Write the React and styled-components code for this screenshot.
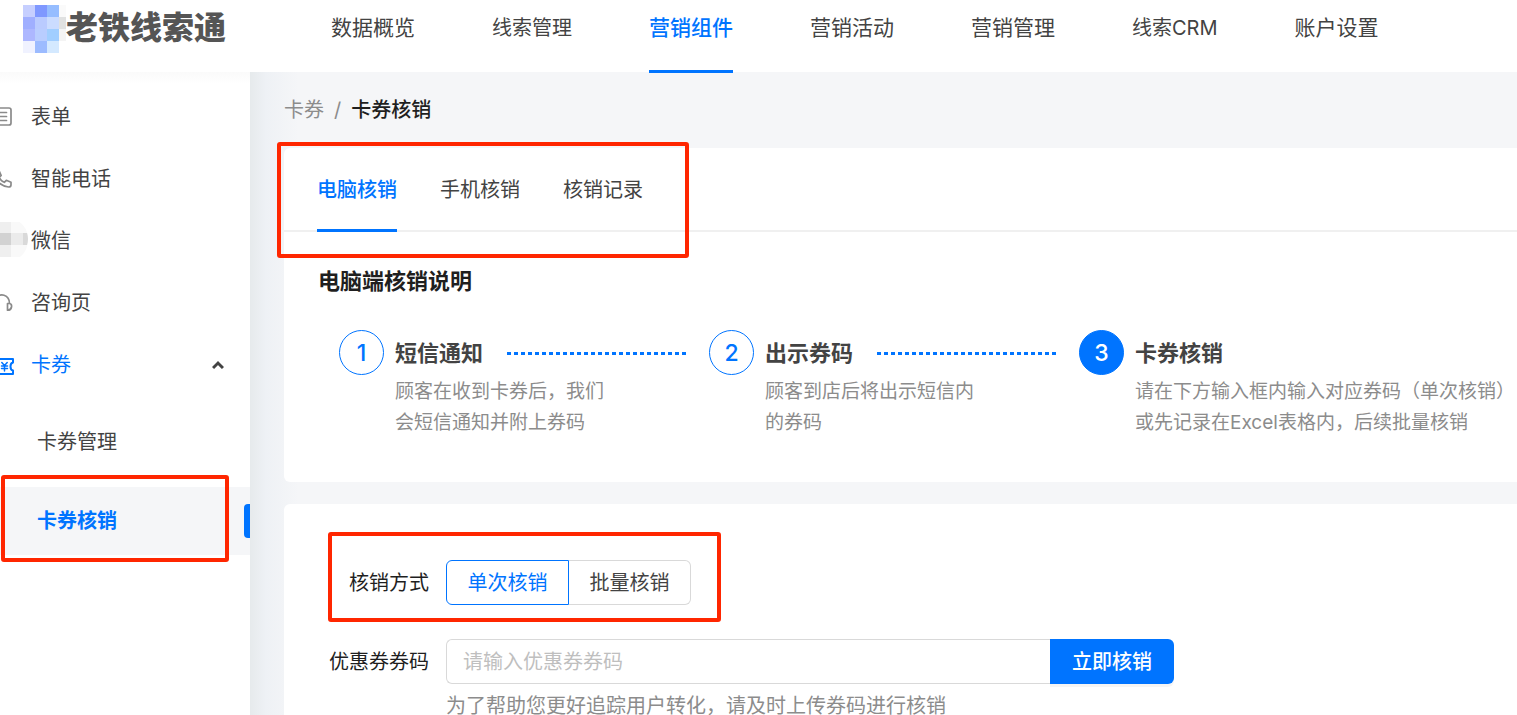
import React from 'react';
import styled, { createGlobalStyle } from 'styled-components';

const BLUE = '#0074ff';

const GlobalStyle = createGlobalStyle`
  * { box-sizing: border-box; }
  html, body, #root { min-height: 100vh; }
  body {
    margin: 0;
    background: #f5f6f8;
    color: #434343;
    font: 20px/32px Inter, "Noto Sans CJK SC", sans-serif;
    overflow: hidden;
  }
  button, input { font: inherit; color: inherit; }
  a { color: inherit; text-decoration: none; }
`;

const Page = styled.div`
  min-height: 100vh;
  display: flex;
  flex-direction: column;
`;

const Header = styled.header`
  display: flex;
  height: 72px;
  background: #fff;
  flex: none;
`;

const Brand = styled.a`
  display: flex;
  align-items: flex-start;
  width: 331px;
  flex: none;
  padding: 5px 0 0 23px;
`;

const BrandName = styled.span`
  font-size: 32px;
  line-height: 46px;
  font-weight: 900;
  color: #555;
`;

const Nav = styled.nav`
  display: flex;
  gap: 77px;
  white-space: nowrap;
`;

const NavLink = styled.a`
  font-size: ${(p) => (p.$small ? '20px' : '21px')};
  line-height: 56px;
  height: 73px;
  position: relative;
  color: ${(p) => (p.$active ? BLUE : '#434343')};
  font-weight: ${(p) => (p.$active ? 500 : 400)};
  border-bottom: 3px solid ${(p) => (p.$active ? BLUE : 'transparent')};
`;

const Body = styled.div`
  display: flex;
  flex: 1;
`;

const Sidebar = styled.aside`
  width: 250px;
  flex: none;
  padding-top: 14px;
  background: linear-gradient(#fafafa, #fff 12px);
`;

const SideLink = styled.a`
  display: flex;
  align-items: center;
  height: 62px;
  padding-right: 26px;
  color: ${(p) => (p.$active ? BLUE : '#434343')};
`;

const SideIcon = styled.span`
  display: flex;
  width: 31px;
  color: ${(p) => (p.$active ? BLUE : '#8a8a8a')};
`;

const SideText = styled.span`
  flex: 1;
`;

const CaretBox = styled.span`
  display: flex;
  color: #434343;
`;

const SubMenu = styled.div`
  padding-top: 12px;
  display: flex;
  flex-direction: column;
  gap: 11px;
`;

const SubLink = styled.a`
  display: flex;
  align-items: center;
  justify-content: space-between;
  height: 68px;
  padding-left: 37px;
  position: relative;
  color: ${(p) => (p.$active ? BLUE : '#434343')};
  font-weight: ${(p) => (p.$active ? 700 : 400)};
  background: ${(p) => (p.$active ? '#f5f6f8' : 'transparent')};
`;

const ActiveBar = styled.span`
  width: 6px;
  height: 34px;
  background: ${BLUE};
  border-radius: 4px 0 0 4px;
`;

const Main = styled.main`
  flex: 1;
  min-width: 0;
  padding-left: 34px;
  background: linear-gradient(90deg, #e6eaec, #eef1f5 16px, #f5f6f8 48px);
`;

const Breadcrumb = styled.nav`
  display: flex;
  gap: 10px;
  height: 76px;
  padding-top: 22px;
  color: #8c8c8c;
`;

const Current = styled.span`
  color: #1f1f1f;
  font-weight: 500;
`;

const Card = styled.section`
  position: relative;
  background: #fff;
  border-radius: 6px 0 0 6px;
`;

const Tabs = styled.div`
  display: flex;
  gap: 43px;
  height: 84px;
  padding: 0 33px;
  border-bottom: 2px solid #f0f0f0;
`;

const Tab = styled.button`
  border: 0;
  background: none;
  padding: 3px 0 0;
  height: 84px;
  color: ${(p) => (p.$active ? BLUE : '#434343')};
  font-weight: ${(p) => (p.$active ? 500 : 400)};
  border-bottom: 3px solid ${(p) => (p.$active ? BLUE : 'transparent')};
`;

const Guide = styled.div`
  height: 250px;
  padding: 33px 0 0 34px;
`;

const Title = styled.h2`
  margin: 0;
  font-size: 22px;
  line-height: 32px;
  font-weight: 700;
  color: #1f1f1f;
`;

const Steps = styled.ol`
  list-style: none;
  display: flex;
  margin: 0;
  padding: 33px 0 0 21px;
`;

const Step = styled.li`
  display: flex;
  gap: 11px;
  flex: ${(p) => (p.$last ? '1 0 auto' : '0 0 370px')};
`;

const StepNumber = styled.span`
  display: flex;
  align-items: center;
  justify-content: center;
  flex: none;
  width: 45px;
  height: 45px;
  border-radius: 50%;
  border: 1px solid ${BLUE};
  font-size: 23px;
  font-weight: 500;
  color: ${(p) => (p.$filled ? '#fff' : BLUE)};
  background: ${(p) => (p.$filled ? BLUE : '#fff')};
`;

const StepBody = styled.div`
  flex: 1;
`;

const StepHead = styled.div`
  display: flex;
  align-items: center;
  gap: 24px;
  height: 46px;
  padding-right: 22px;
`;

const StepName = styled.h3`
  margin: 0;
  font-size: 22px;
  font-weight: 700;
  color: #434343;
`;

const Dots = styled.span`
  flex: 1;
  height: 3px;
  background: repeating-linear-gradient(90deg, ${BLUE} 0 4px, transparent 4px 7px);
`;

const StepText = styled.p`
  margin: 0;
  font-size: 19px;
  line-height: 31px;
  color: #8c8c8c;
  white-space: pre;
`;

const FormCard = styled(Card)`
  margin-top: 22px;
  padding-top: 56px;
  min-height: 220px;
`;

const Field = styled.div`
  display: flex;
  align-items: center;
  height: 45px;
  margin-bottom: ${(p) => (p.$last ? 0 : '34px')};
`;

const FieldLabel = styled.label`
  width: 145px;
  margin-right: 17px;
  text-align: right;
  color: #1f1f1f;
`;

const Toggle = styled.button`
  width: ${(p) => (p.$active ? '123px' : '122px')};
  height: 45px;
  padding: 0;
  background: #fff;
  color: ${(p) => (p.$active ? BLUE : '#434343')};
  border: solid ${(p) => (p.$active ? BLUE : '#d9d9d9')};
  border-width: ${(p) => (p.$active ? '1px' : '1px 1px 1px 0')};
  border-radius: ${(p) => (p.$active ? '6px 0 0 6px' : '0 6px 6px 0')};
`;

const Input = styled.input`
  width: 604px;
  height: 45px;
  padding: 0 16px;
  border: 1px solid #d9d9d9;
  border-right: 0;
  border-radius: 6px 0 0 6px;
  outline: 0;
  background: #fff;
  &::placeholder { color: #bfbfbf; opacity: 1; }
`;

const Submit = styled.button`
  width: 124px;
  height: 45px;
  padding: 0;
  border: 0;
  border-radius: 0 6px 6px 0;
  color: #fff;
  font-weight: 500;
  background: ${BLUE};
  box-shadow: 0 3px 0 rgba(0, 0, 0, 0.04);
`;

const Hint = styled.p`
  margin: 0;
  padding: 6px 0 0 162px;
  color: #8c8c8c;
`;

const Highlight = styled.span`
  position: absolute;
  left: ${(p) => p.$x}px;
  top: ${(p) => p.$y}px;
  width: ${(p) => p.$w}px;
  height: ${(p) => p.$h}px;
  border: 4px solid #ff2600;
  border-radius: 3px;
  pointer-events: none;
`;

const Mosaic = () => (
  <svg width="43" height="48" viewBox="0 0 43 48" shapeRendering="crispEdges" aria-hidden="true">
    {[
      ['#c6cfff', '#7f98ff', '#96bdff'],
      ['#a0afff', '#bacbff', '#cbdcff'],
      ['#adb7ff', '#b9cdff', '#a1ceff'],
      ['#f0f2ff', '#9cbbff', '#d4e9ff'],
    ].map((row, y) =>
      row.map((fill, x) => (
        <rect key={`${x}-${y}`} x={x * 12} y={y * 12} width="12" height="12" fill={fill} />
      ))
    )}
    <rect x="36" width="7" height="12" fill="#fafafa" />
    <rect x="36" y="12" width="7" height="12" fill="#e0e1e1" />
    <rect x="36" y="24" width="7" height="12" fill="#f4f4f4" />
  </svg>
);

const iconProps = {
  fill: 'none',
  stroke: 'currentColor',
  strokeWidth: 1.7,
  strokeLinecap: 'round',
  strokeLinejoin: 'round',
  'aria-hidden': true,
};

const FormIcon = () => (
  <svg width="16" height="22" viewBox="0 0 16 22" {...iconProps}>
    <path d="M-5 2H9a2 2 0 0 1 2 2V17a2 2 0 0 1-2 2H-5M-2 6.500H6.500M-2 10.500H6.500M-2 14.500H6.500" />
  </svg>
);

const PhoneIcon = () => (
  <svg width="16" height="22" viewBox="0 0 16 22" {...iconProps}>
    <path d="M-1 2.500L1.200 7.500L-0.800 9.500Q1 13 4.300 14.300L6.300 12.300L11 14.300V17Q11 19 8.500 19Q2.500 18.500 -3 13" />
  </svg>
);

const WechatMosaic = () => (
  <svg width="28" height="38" viewBox="0 1 28 38" aria-hidden="true">
    <path d="M11 0H18Q28 6 28 18Q28 30 20 36H11Z" fill="#f9f9f9" />
    <path d="M0 0H11V36H0Z" fill="#efefef" />
    <path d="M0 12H11V24H0Z" fill="#d2d2d2" />
    <path d="M11 12H23V24H11Z" fill="#ebebeb" />
    <path d="M23 12H27Q29 18 27 24H23Z" fill="#d9d9d9" />
  </svg>
);

const HeadsetIcon = () => (
  <svg width="16" height="22" viewBox="0 0 16 22" {...iconProps}>
    <path d="M-2 4Q1 2.200 4 3.200Q9.500 5 9.500 11.500M7.500 11.500H9.500Q12 12 11.500 15Q11 18.200 7.500 18.200Z" />
  </svg>
);

const CouponIcon = () => (
  <svg width="16" height="22" viewBox="0 0 16 22" {...iconProps} strokeWidth="2">
    <path d="M-2 5H13V8.500Q10.500 9 10.500 12.500Q10.500 16 13 16.500V20H-2" />
    <path d="M1.800 8.500L4.500 11.500L7.200 8.500M4.500 11.500V17M1.500 12H7.500M1.500 14.500H7.500" strokeWidth="1.500" />
  </svg>
);

const Caret = () => (
  <svg width="12" height="10" viewBox="0 0 12 10" {...iconProps} strokeWidth="3" strokeLinecap="butt" strokeLinejoin="miter">
    <path d="M1 8L6 3L11 8" />
  </svg>
);

const NAV = ['数据概览', '线索管理', '营销组件', '营销活动', '营销管理', '线索CRM', '账户设置'];
const SIDE = [
  ['表单', FormIcon],
  ['智能电话', PhoneIcon],
  ['微信', WechatMosaic],
  ['咨询页', HeadsetIcon],
  ['卡券', CouponIcon],
];
const STEPS = [
  ['短信通知', '顾客在收到卡券后，我们\n会短信通知并附上券码'],
  ['出示券码', '顾客到店后将出示短信内\n的券码'],
  ['卡券核销', '请在下方输入框内输入对应券码（单次核销）\n或先记录在Excel表格内，后续批量核销'],
];

export default function App() {
  return (
    <Page>
      <GlobalStyle />
      <Header>
        <Brand href="#">
          <Mosaic />
          <BrandName>老铁线索通</BrandName>
        </Brand>
        <Nav>
          {NAV.map((name) => (
            <NavLink
              key={name}
              href="#"
              $active={name === '营销组件'}
              $small={name.startsWith('线索')}
            >
              {name}
            </NavLink>
          ))}
        </Nav>
      </Header>
      <Body>
        <Sidebar>
          {SIDE.map(([name, Icon]) => {
            const active = name === '卡券';
            return (
              <SideLink key={name} href="#" $active={active}>
                <SideIcon $active={active}><Icon /></SideIcon>
                <SideText>{name}</SideText>
                {active && <CaretBox><Caret /></CaretBox>}
              </SideLink>
            );
          })}
          <SubMenu>
            <SubLink href="#">卡券管理</SubLink>
            <SubLink href="#" $active>
              卡券核销
              <ActiveBar />
              <Highlight $x={1} $y={-12} $w={228} $h={87} />
            </SubLink>
          </SubMenu>
        </Sidebar>
        <Main>
          <Breadcrumb>
            <a href="#">卡券</a>
            <span>/</span>
            <Current>卡券核销</Current>
          </Breadcrumb>
          <Card>
            <Tabs>
              <Tab $active>电脑核销</Tab>
              <Tab>手机核销</Tab>
              <Tab>核销记录</Tab>
            </Tabs>
            <Highlight $x={-7} $y={-6} $w={412} $h={116} />
            <Guide>
              <Title>电脑端核销说明</Title>
              <Steps>
                {STEPS.map(([name, text], i) => (
                  <Step key={name} $last={i === 2}>
                    <StepNumber $filled={i === 2}>{i + 1}</StepNumber>
                    <StepBody>
                      <StepHead>
                        <StepName>{name}</StepName>
                        {i < 2 && <Dots />}
                      </StepHead>
                      <StepText>{text}</StepText>
                    </StepBody>
                  </Step>
                ))}
              </Steps>
            </Guide>
          </Card>
          <FormCard>
            <Field role="group" aria-labelledby="mode">
              <FieldLabel as="span" id="mode">核销方式</FieldLabel>
              <Toggle $active>单次核销</Toggle>
              <Toggle>批量核销</Toggle>
            </Field>
            <Highlight $x={44} $y={28} $w={393} $h={90} />
            <Field $last>
              <FieldLabel htmlFor="code">优惠券券码</FieldLabel>
              <Input id="code" placeholder="请输入优惠券券码" />
              <Submit>立即核销</Submit>
            </Field>
            <Hint>为了帮助您更好追踪用户转化，请及时上传券码进行核销</Hint>
          </FormCard>
        </Main>
      </Body>
    </Page>
  );
}
